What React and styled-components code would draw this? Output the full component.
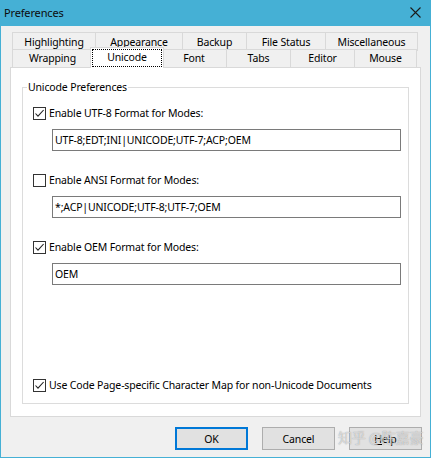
import React from 'react';
import styled, { createGlobalStyle } from 'styled-components';

const FONT = '"Noto Sans", "Liberation Sans", "Noto Sans CJK SC", sans-serif';

const Global = createGlobalStyle`
  html, body { margin: 0; padding: 0; background: #f0f0f0; }
  body { font-family: ${FONT}; font-size: 10.5px; letter-spacing: -0.15px; color: #000; }
  * { box-sizing: border-box; }
`;

const Window = styled.div`
  position: relative;
  width: 431px;
  height: 458px;
  display: flex;
  flex-direction: column;
  background: #f0f0f0;
  border: 1px solid #45b0d5;
  border-top: none;
  overflow: hidden;
`;

const TitleBar = styled.div`
  height: 26px;
  flex-shrink: 0;
  display: flex;
  align-items: center;
  justify-content: space-between;
  background: #45b0d5;
  padding: 0 9px 2px 3px;
  font-size: 11px;
  color: #0c0c0c;
`;

const Content = styled.div`
  flex: 1;
  display: flex;
  flex-direction: column;
  padding: 6px 9px 0 9px;
`;

const TabRows = styled.div`
  margin-left: 2px;
  width: 407px;
  display: flex;
  flex-direction: column;
`;

const TabRow = styled.div`
  display: flex;
  height: ${p => p.$h}px;
  margin-top: ${p => (p.$first ? 0 : -1)}px;
`;

const Tab = styled.div`
  width: ${p => p.$w}px;
  height: ${p => p.$h}px;
  flex-shrink: 0;
  display: flex;
  align-items: center;
  justify-content: center;
  border: 1px solid #d9d9d9;
  border-bottom: none;
  margin-left: -1px;
  background: #f0f0f0;
  white-space: nowrap;
  padding-bottom: 1px;
  &:first-child { margin-left: 0; }
`;

const ActiveTab = styled.div`
  position: relative;
  z-index: 2;
  width: ${p => p.$w + 4}px;
  height: 21px;
  flex-shrink: 0;
  margin: -2px -2px -2px -3px;
  padding: 1px;
  display: flex;
  background: #fff;
  border: 1px solid #d9d9d9;
  border-bottom: none;
`;

const Focus = styled.span`
  flex: 1;
  display: flex;
  align-items: center;
  justify-content: center;
  border: 1px dotted #000;
  padding-bottom: 2px;
`;

const Panel = styled.div`
  height: 350px;
  display: flex;
  flex-direction: column;
  background: #fff;
  border: 1px solid #d9d9d9;
  padding: 19px 11px 12px 11px;
`;

const Group = styled.div`
  position: relative;
  flex: 1;
  display: flex;
  flex-direction: column;
  border: 1px solid #dcdcdc;
  padding: 17px 10px 10px 10px;
`;

const Legend = styled.span`
  position: absolute;
  top: -9px;
  left: 4px;
  padding: 0 1px;
  line-height: 16px;
  background: #fff;
`;

const OptionRow = styled.label`
  display: flex;
  align-items: center;
  height: 16px;
  gap: 3px;
  white-space: nowrap;
  margin-top: ${p => p.$mt || 0}px;
`;

const Box = styled.span`
  width: 13px;
  height: 13px;
  flex-shrink: 0;
  border: 1px solid #333;
  background: #fff;
  display: flex;
  align-items: center;
  justify-content: center;
`;

const Field = styled.div`
  margin: 8px 0 0 19px;
  width: 349px;
  height: 22px;
  border: 1px solid #7a7a7a;
  background: #fff;
  display: flex;
  align-items: center;
  padding: 0 2px;
  white-space: nowrap;
`;

const Bottom = styled.div`
  margin-top: auto;
`;

const ButtonRow = styled.div`
  display: flex;
  justify-content: flex-end;
  gap: 14px;
  margin: 10px -1px 0 0;
`;

const Button = styled.div`
  width: 73px;
  height: 23px;
  display: flex;
  align-items: center;
  justify-content: center;
  background: #e1e1e1;
  border: ${p => (p.$default ? '2px solid #0078d7' : '1px solid #adadad')};
`;

const Watermark = styled.div`
  position: absolute;
  left: 337px;
  top: 427px;
  font-size: 14px;
  line-height: 20px;
  white-space: nowrap;
  font-family: "Noto Sans CJK SC", sans-serif;
  color: rgba(255, 255, 255, 0.6);
  text-shadow: 0 0 1px rgba(100, 100, 100, 0.7);
  pointer-events: none;
`;

const Check = ({ checked }) => (
  <Box>
    {checked && (
      <svg width="11" height="11" viewBox="0 0 11 11">
        <path d="M1.5 5.5 L4 8.2 L9.6 2" fill="none" stroke="#222" strokeWidth="1.1" />
      </svg>
    )}
  </Box>
);

const Close = () => (
  <svg width="11" height="11" viewBox="0 0 11 11">
    <path d="M0.5 0.5 L10.5 10.5 M10.5 0.5 L0.5 10.5" stroke="#1b1b1b" strokeWidth="1.1" />
  </svg>
);

const topTabs = [
  ['Highlighting', 84],
  ['Appearance', 88],
  ['Backup', 65],
  ['File Status', 80],
  ['Miscellaneous', 93],
];

const bottomTabs = [
  ['Wrapping', 81],
  ['Unicode', 70, true],
  ['Font', 66],
  ['Tabs', 65],
  ['Editor', 65],
  ['Mouse', 63],
];

const options = [
  ['Enable UTF-8 Format for Modes:', true, 'UTF-8;EDT;INI|UNICODE;UTF-7;ACP;OEM'],
  ['Enable ANSI Format for Modes:', false, '*;ACP|UNICODE;UTF-8;UTF-7;OEM'],
  ['Enable OEM Format for Modes:', true, 'OEM'],
];

export default function App() {
  return (
    <>
      <Global />
      <Window>
        <TitleBar>
          <span>Preferences</span>
          <Close />
        </TitleBar>
        <Content>
          <TabRows>
            <TabRow $h={18} $first>
              {topTabs.map(([t, w]) => (
                <Tab key={t} $w={w} $h={19}>{t}</Tab>
              ))}
            </TabRow>
            <TabRow $h={18}>
              {bottomTabs.map(([t, w, active]) =>
                active ? (
                  <ActiveTab key={t} $w={w}><Focus>{t}</Focus></ActiveTab>
                ) : (
                  <Tab key={t} $w={w} $h={18}>{t}</Tab>
                )
              )}
            </TabRow>
          </TabRows>
          <Panel>
            <Group>
              <Legend>Unicode Preferences</Legend>
              {options.map(([label, checked, value], i) => (
                <div key={label}>
                  <OptionRow $mt={i === 0 ? 0 : 21}>
                    <Check checked={checked} />
                    <span>{label}</span>
                  </OptionRow>
                  <Field>{value}</Field>
                </div>
              ))}
              <Bottom>
                <OptionRow>
                  <Check checked />
                  <span>Use Code Page-specific Character Map for non-Unicode Documents</span>
                </OptionRow>
              </Bottom>
            </Group>
          </Panel>
          <ButtonRow>
            <Button $default>OK</Button>
            <Button>Cancel</Button>
            <Button><span><u>H</u>elp</span></Button>
          </ButtonRow>
        </Content>
        <Watermark>知乎 @陈嘉豪</Watermark>
      </Window>
    </>
  );
}
